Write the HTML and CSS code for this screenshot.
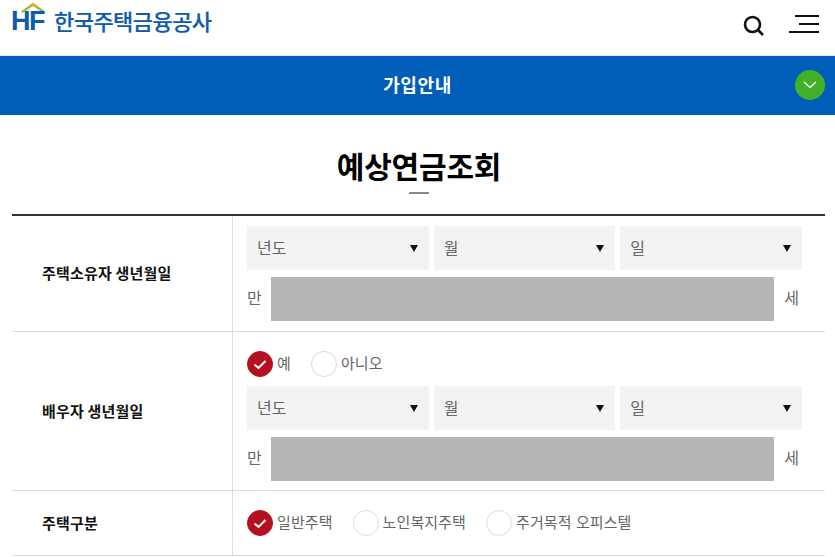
FILE: index.html
```html
<!DOCTYPE html>
<html lang="ko">
<head>
<meta charset="utf-8">
<title>예상연금조회</title>
<link rel="stylesheet" href="styles.css">
</head>
<body>
<header class="top">
  <div class="logo">
    <div class="logo-mark">
      <svg class="roof" width="24" height="10" viewBox="0 0 24 10"><path d="M1 9 L12 1.5 L23 9" fill="none" stroke="#8cc63f" stroke-width="2.6"/><path d="M8 4 L12 1.5 L16 4" fill="none" stroke="#f0a030" stroke-width="2.6"/></svg>
      <span class="hf">HF</span>
    </div>
    <span class="logo-text">한국주택금융공사</span>
  </div>
  <div class="top-icons">
    <svg width="22" height="22" viewBox="0 0 22 22"><circle cx="9.5" cy="9.5" r="7.5" fill="none" stroke="#111" stroke-width="2.6"/><path d="M15 15 L20 20" stroke="#111" stroke-width="2.6"/></svg>
    <div class="burger"><i class="b1"></i><i class="b2"></i><i class="b3"></i></div>
  </div>
</header>
<div class="band">
  <span>가입안내</span>
  <span class="toggle"><svg width="14" height="8" viewBox="0 0 14 8"><path d="M1 1 L7 6.5 L13 1" fill="none" stroke="#fff" stroke-width="1.3"/></svg></span>
</div>
<h1 class="title">예상연금조회</h1>
<div class="dash"></div>
<div class="form">
  <div class="row r1">
    <div class="label">주택소유자 생년월일</div>
    <div class="field">
      <div class="selects">
        <div class="sel">년도</div><div class="sel">월</div><div class="sel">일</div>
      </div>
      <div class="age"><span>만</span><div class="bar"></div><span class="se">세</span></div>
    </div>
  </div>
  <div class="row r2">
    <div class="label">배우자 생년월일</div>
    <div class="field">
      <div class="radios">
        <div class="radio on"><i><svg width="14" height="11" viewBox="0 0 14 11"><path d="M1.5 5.5 L5.5 9 L12.5 2" fill="none" stroke="#fff" stroke-width="2"/></svg></i>예</div>
        <div class="radio"><i></i>아니오</div>
      </div>
      <div class="selects">
        <div class="sel">년도</div><div class="sel">월</div><div class="sel">일</div>
      </div>
      <div class="age"><span>만</span><div class="bar"></div><span class="se">세</span></div>
    </div>
  </div>
  <div class="row r3">
    <div class="label">주택구분</div>
    <div class="field">
      <div class="radios">
        <div class="radio on"><i><svg width="14" height="11" viewBox="0 0 14 11"><path d="M1.5 5.5 L5.5 9 L12.5 2" fill="none" stroke="#fff" stroke-width="2"/></svg></i>일반주택</div>
        <div class="radio"><i></i>노인복지주택</div>
        <div class="radio"><i></i>주거목적 오피스텔</div>
      </div>
    </div>
  </div>
</div>
</body>
</html>
```
FILE: styles.css
```css
* { box-sizing: border-box; }
html, body { margin: 0; padding: 0; height: 557px; overflow: hidden; background: #fff; }
body { font-family: "Noto Sans CJK KR", "Noto Sans", sans-serif; color: #666; font-size: 15px; }

.top { height: 56px; display: flex; justify-content: space-between; align-items: flex-start; padding: 0 16px 0 12px; border-bottom: 1px solid #e5e5e5; }
.logo { display: flex; align-items: flex-start; gap: 8px; padding-top: 3px; }
.logo-mark { position: relative; width: 34px; height: 30px; }
.roof { position: absolute; left: 9px; top: 0; }
.hf { position: absolute; left: -1px; top: 3px; font-family: "Liberation Sans", sans-serif; font-weight: 700; font-size: 27px; line-height: 30px; color: #0f5ba7; letter-spacing: -1.6px; }
.logo-text { font-size: 22px; font-weight: 500; line-height: 30px; color: #0f5ba7; letter-spacing: -0.55px; margin-top: 2px; -webkit-text-stroke: 0.2px #0f5ba7; }
.top-icons { display: flex; align-items: flex-start; gap: 24px; padding-top: 15px; }
.burger { position: relative; width: 30px; height: 18px; }
.burger i { position: absolute; right: 0; height: 2px; background: #111; }
.b1 { top: 0; width: 24px; }
.b2 { top: 8px; width: 20px; }
.b3 { top: 16px; width: 30px; }

.band { position: relative; height: 59px; padding-bottom: 3px; background: #005eb8; color: #fff; display: flex; align-items: center; justify-content: center; font-size: 18px; font-weight: 700; letter-spacing: 0.6px; }
.toggle { position: absolute; right: 10px; top: 14px; width: 30px; height: 30px; border-radius: 50%; background: #43b02a; display: flex; align-items: center; justify-content: center; }

.title { margin: 0; padding-top: 28px; padding-left: 3px; text-align: center; font-size: 30px; line-height: 44px; font-weight: 700; color: #000; letter-spacing: -0.2px; }
.dash { width: 20px; height: 2px; background: #888; margin: 5px 0 20px 409px; }

.form { margin: 0 10px 0 12px; border-top: 2px solid #333; }
.row { display: flex; border-bottom: 1px solid #ddd; }
.r1 { height: 116px; }
.r2 { height: 159px; }
.r3 { height: 65px; }
.label { width: 221px; border-right: 1px solid #ddd; padding: 0 0 2px 30px; display: flex; align-items: center; font-size: 15px; font-weight: 700; color: #111; letter-spacing: 0.2px; word-spacing: -1px; }
.field { flex: 1; padding: 10px 23px 0 14px; display: flex; flex-direction: column; }

.selects { display: flex; gap: 5px; width: 555px; }
.sel { position: relative; flex: 1; height: 44px; background: #f3f3f3; padding-left: 10px; line-height: 42px; font-size: 16px; color: #666; }
.sel::after { content: ""; position: absolute; right: 11px; top: 19px; border: 4px solid transparent; border-top: 7px solid #111; border-bottom: 0; }

.age { display: flex; align-items: center; margin-top: 7px; height: 44px; width: 552px; font-size: 16px; }
.age span { width: 24px; padding-bottom: 4px; }
.age .se { width: auto; margin-left: 10px; }
.bar { flex: 1; height: 44px; background: #b5b5b5; }

.radios { display: flex; gap: 20px; height: 26px; }
.r2 .field { padding-top: 19px; }
.r2 .selects { margin-top: 9px; }
.r3 .field { padding-top: 19px; }
.radio { display: flex; align-items: flex-start; gap: 4px; font-size: 15px; color: #666; line-height: 24px; letter-spacing: 0.1px; }
.radio i { width: 26px; height: 26px; border-radius: 50%; border: 1px solid #ddd; background: #fff; display: flex; align-items: center; justify-content: center; }
.radio.on i { background: #b5101f; border-color: #b5101f; }
```
